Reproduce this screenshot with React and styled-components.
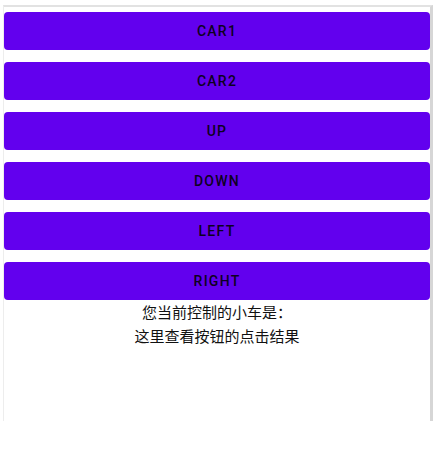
import React from "react";
import styled, { createGlobalStyle } from "styled-components";

const GlobalStyle = createGlobalStyle`
    html, body {
        margin: 0;
        padding: 0;
        background: #ffffff;
    }
`;

const Frame = styled.div`
    width: 426px;
    height: 409px;
    margin: 5px 0 0 3px;
    border-top: 2px solid #e2e2e2;
    border-left: 1px solid #ededed;
    border-right: 3px solid #d6d6d6;
    /*item 정렬*/
    display: flex;
    flex-direction: column;
    align-items: stretch;
    padding-top: 5px;
    box-sizing: content-box;
`;

const ButtonList = styled.div`
    display: flex;
    flex-direction: column;
    gap: 12px;
`;

const CarButton = styled.button`
    height: 38px;
    width: 100%;
    border: none;
    border-radius: 4px;
    background-color: #6200ee;
    color: #0e0022;
    font-family: Roboto, "Liberation Sans", sans-serif;
    font-weight: 500;
    font-size: 14px;
    letter-spacing: 1.25px;
    text-transform: uppercase;
    cursor: pointer;
`;

const ResultText = styled.div`
    text-align: center;
    font-family: "Noto Sans CJK SC", "Noto Sans", sans-serif;
    font-size: 15px;
    line-height: 24px;
    color: #111111;
`;

const buttons = ["CAR1", "CAR2", "UP", "DOWN", "LEFT", "RIGHT"];

const App = () => {
    return (
        <>
            <GlobalStyle />
            <Frame>
                <ButtonList>
                    {buttons.map((label) => (
                        <CarButton key={label}>{label}</CarButton>
                    ))}
                </ButtonList>
                <ResultText>
                    您当前控制的小车是：
                    <br />
                    这里查看按钮的点击结果
                </ResultText>
            </Frame>
        </>
    );
};

export default App;
